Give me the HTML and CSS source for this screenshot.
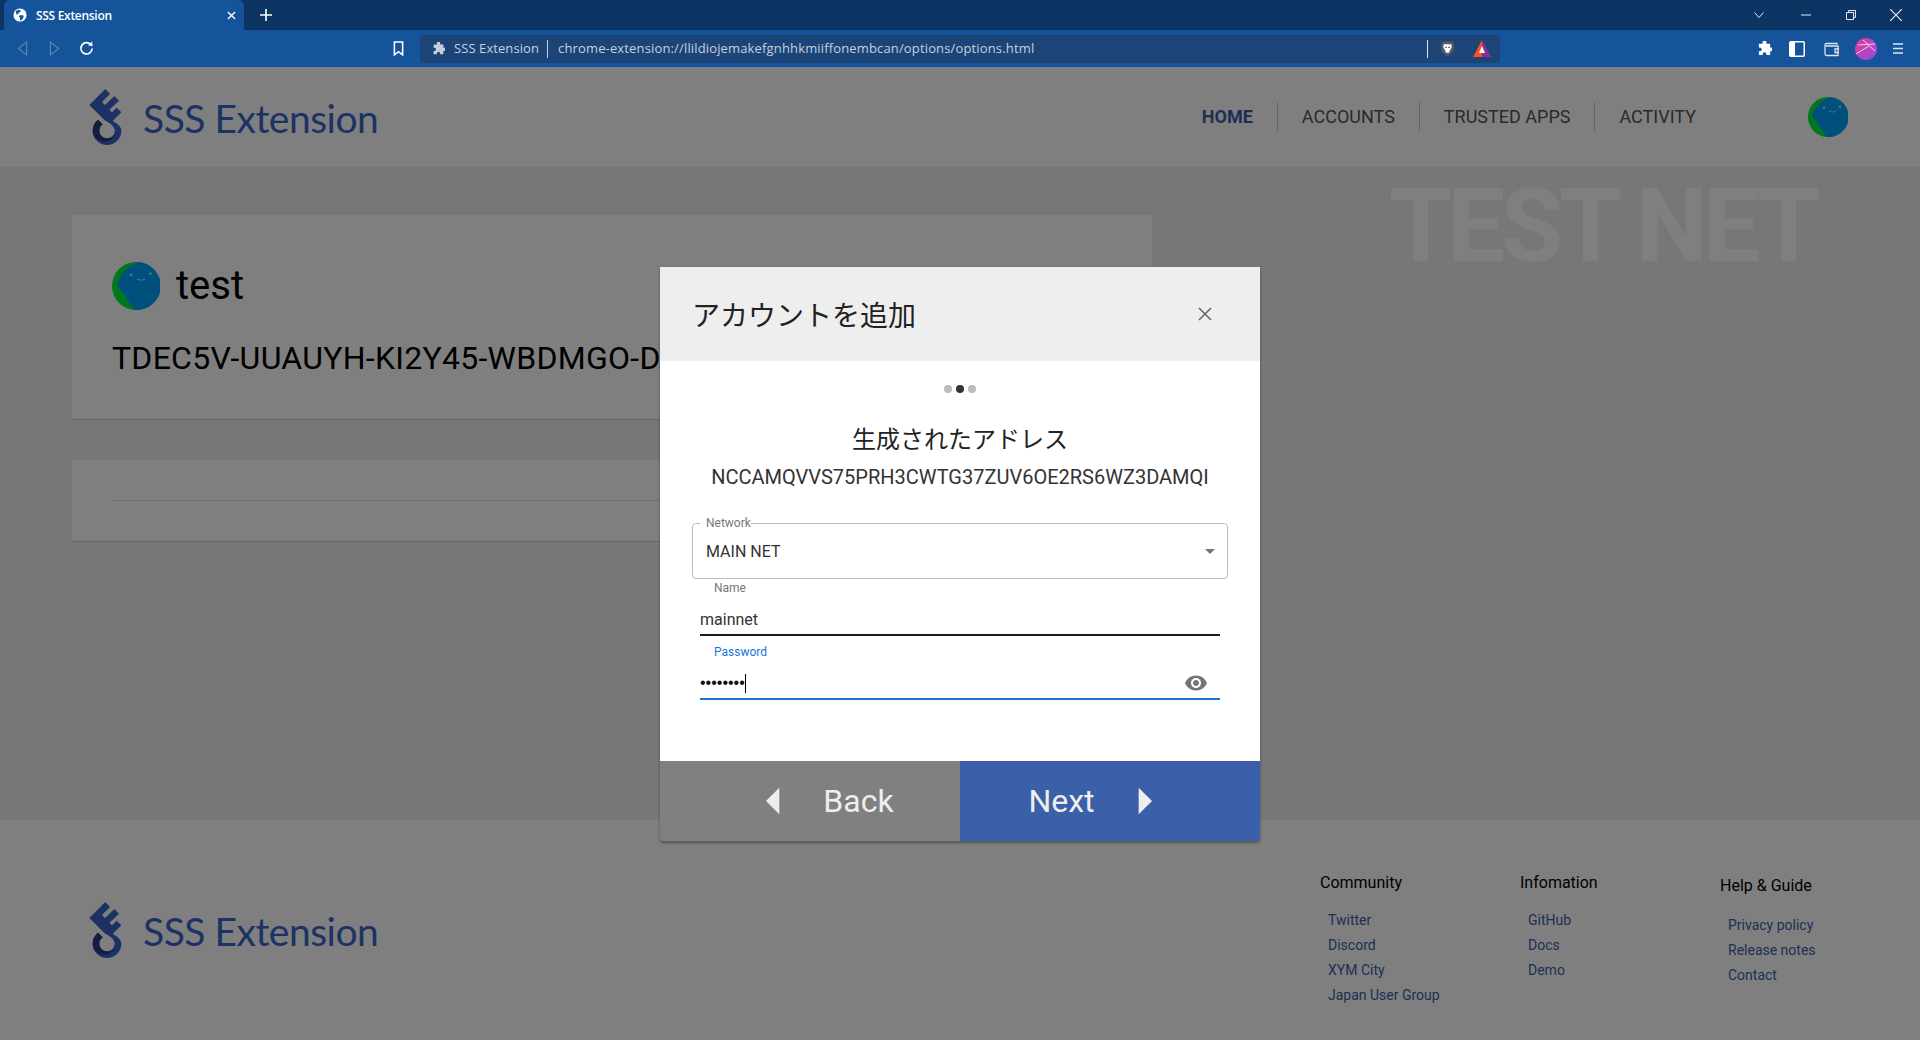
FILE: index.html
```html
<!DOCTYPE html>
<html lang="ja">

<head>
    <meta charset="UTF-8">
    <title>SSS Extension</title>
    <link rel="stylesheet" href="styles.css">
</head>

<body>
    <svg class="defs" width="0" height="0">
        <symbol id="logo" viewBox="22 12 97 168">
            <path fill="#3a64c8" d="M70 12 84 27 60 51 69 60 97 33 111 47 82 74 90 82 104 68 118 82 92 108C106 115 118 125 118 137A43 43 0 0 1 32 137C32 122 38 112 48 104L62 118C54 124 52 130 52 137A23 23 0 0 0 98 137C98 125 85 115 68 106L22 60Z" />
            <path fill="#243c78" d="M48 104 62 118C54 124 52 130 52 137 52 150 62 160 75 160 85 160 92 158 98 150 92 165 78 172 62 170 42 165 32 152 32 137 32 122 38 112 48 104Z" />
        </symbol>
        <symbol id="avatar" viewBox="84 36 120 120">
            <circle cx="144" cy="96" r="60" fill="#00f03c" />
            <path fill="#00a0fa" d="M150 36 A60 60 0 0 1 142 156 L140 156 L96 92 C105 65 125 45 150 36Z" />
            <circle cx="132" cy="68" r="3.5" fill="#bfe4fa" />
            <circle cx="180" cy="65" r="3.5" fill="#bfe4fa" />
            <path d="M147 79q10 5 20 0" fill="none" stroke="#bfe4fa" stroke-width="2.5" />
        </symbol>
    </svg>

    <div class="browser">
        <div class="tabstrip">
            <div class="tab">
                <svg class="tab-globe" viewBox="0 0 16 16">
                    <circle cx="8" cy="8" r="7.5" fill="#fff" />
                    <path fill="#15549b" d="M3 3.5 6.5 2 9 3 8 5 6 5.500 6 7 4 7.500ZM8.500 8 12 8.500 12 11 9.500 14 8 14 8 11 6.500 9.500Z" />
                </svg>
                <span class="tab-title">SSS Extension</span>
                <svg class="tab-close" viewBox="0 0 10 10"><path d="M1 1 9 9M9 1 1 9" /></svg>
            </div>
            <svg class="tab-new" viewBox="0 0 12 12"><path d="M6 0V12M0 6H12" /></svg>
            <div class="win-controls">
                <svg class="win-chevron" viewBox="0 0 10 6"><path d="M.5.5 5 5.500 9.500.5" /></svg>
                <svg class="win-min" viewBox="0 0 10 10"><path d="M0 5H10" /></svg>
                <svg class="win-restore" viewBox="0 0 10 10"><path d="M.5 2.500H7.500V9.500H.5ZM2.500 2.500V.5H9.500V7.500H7.500" /></svg>
                <svg class="win-close" viewBox="0 0 10 10"><path d="M0 0 10 10M10 0 0 10" /></svg>
            </div>
        </div>

        <div class="toolbar">
            <svg class="tb-back" viewBox="0 0 12 16"><path d="M10.500 1 1.500 8 10.500 15Z" /></svg>
            <svg class="tb-forward" viewBox="0 0 12 16"><path d="M1.500 1 10.500 8 1.500 15Z" /></svg>
            <svg class="tb-reload" viewBox="0 0 16 16">
                <path d="M13 4.500A6 6 0 1 0 14 8" />
                <path class="solid" d="M9.500 4.500 14.500 5.500 14 .5Z" />
            </svg>
            <svg class="tb-bookmark" viewBox="0 0 12 16"><path d="M1.500 1H10.500V15L6 11.500 1.500 15Z" /></svg>
            <div class="urlbar">
                <svg class="puzzle" viewBox="0 0 16 16"><path d="M6 1a2 2 0 0 1 4 0V3H14V7H15a2 2 0 0 1 0 4H14V15H10V14a2 2 0 0 0-4 0V15H2V11H3a2 2 0 0 0 0-4H2V3H6Z" /></svg>
                <span class="url-name">SSS Extension</span>
                <span class="url-sep"></span>
                <span class="url-text">chrome-extension://llildiojemakefgnhhkmiiffonembcan/options/options.html</span>
                <span class="url-sep url-sep-end"></span>
                <svg class="brave" viewBox="0 0 16 18">
                    <path fill="#555a66" d="M3 1H13L15 4 14 12 8 17 2 12 1 4Z" />
                    <path fill="#fff" d="M4 4H12L12.500 7 10.500 10.500 9.500 13H6.500L5.500 10.500 3.500 7Z" />
                    <path fill="#555a66" d="M5.500 6.500H7L7.500 8H5.500ZM9 6.500H10.500V8H8.500Z" />
                </svg>
                <svg class="rewards" viewBox="0 0 18 18">
                    <path fill="#ff4f20" d="M9 0 0 17H9Z" />
                    <path fill="#8f2b9c" d="M9 0 18 17H9Z" />
                    <path fill="#fff" d="M9 6 12 13H6Z" />
                </svg>
            </div>
            <svg class="puzzle puzzle-white" viewBox="0 0 16 16"><path d="M6 1a2 2 0 0 1 4 0V3H14V7H15a2 2 0 0 1 0 4H14V15H10V14a2 2 0 0 0-4 0V15H2V11H3a2 2 0 0 0 0-4H2V3H6Z" /></svg>
            <svg class="tb-sidebar" viewBox="0 0 16 16">
                <rect x=".75" y=".75" width="14.500" height="14.500" rx="1" fill="none" stroke="#fff" stroke-width="1.500" />
                <rect x="1" y="1" width="5" height="14" fill="#fff" />
            </svg>
            <svg class="tb-wallet" viewBox="0 0 16 16">
                <path d="M13 3.500V2.500H2.500A1.500 1.500 0 0 0 1 4V13A1.500 1.500 0 0 0 2.500 14.500H14V5H2" />
                <path d="M15 8H11V11.500H15" />
            </svg>
            <svg class="tb-profile" viewBox="0 0 22 22">
                <defs>
                    <linearGradient id="profile-fill" x1="0" y1="0" x2="1" y2="1">
                        <stop offset="0" stop-color="#e8389a" />
                        <stop offset="1" stop-color="#8a50e0" />
                    </linearGradient>
                </defs>
                <circle cx="11" cy="11" r="11" fill="url(#profile-fill)" />
                <path d="M3 7 20 6M8 2 20 13M1 16 14 8" stroke="#f6cbe6" stroke-width="1" fill="none" />
            </svg>
            <svg class="tb-menu" viewBox="0 0 10 12"><path d="M0 1.500H10M0 6H10M0 10.500H10" /></svg>
        </div>

        <div class="page">
            <header class="site-header">
                <div class="brand">
                    <svg class="brand-logo"><use href="#logo" /></svg>
                    <span class="brand-name">SSS Extension</span>
                </div>
                <nav class="site-nav">
                    <a class="nav-item active">HOME</a>
                    <a class="nav-item">ACCOUNTS</a>
                    <a class="nav-item">TRUSTED APPS</a>
                    <a class="nav-item">ACTIVITY</a>
                </nav>
                <svg class="header-avatar"><use href="#avatar" /></svg>
            </header>

            <main class="home">
                <div class="watermark">TEST NET</div>
                <section class="card account-card">
                    <div class="account-head">
                        <svg class="account-avatar"><use href="#avatar" /></svg>
                        <span class="account-name">test</span>
                    </div>
                    <div class="account-address">TDEC5V-UUAUYH-KI2Y45-WBDMGO-D</div>
                </section>
                <section class="card empty-card">
                    <hr class="card-rule">
                </section>
            </main>

            <footer class="site-footer">
                <div class="brand footer-brand">
                    <svg class="brand-logo"><use href="#logo" /></svg>
                    <span class="brand-name">SSS Extension</span>
                </div>
                <div class="footer-cols">
                    <div class="footer-col">
                        <h4>Community</h4>
                        <a>Twitter</a>
                        <a>Discord</a>
                        <a>XYM City</a>
                        <a>Japan User Group</a>
                    </div>
                    <div class="footer-col">
                        <h4>Infomation</h4>
                        <a>GitHub</a>
                        <a>Docs</a>
                        <a>Demo</a>
                    </div>
                    <div class="footer-col footer-col-help">
                        <h4>Help &amp; Guide</h4>
                        <a>Privacy policy</a>
                        <a>Release notes</a>
                        <a>Contact</a>
                    </div>
                </div>
            </footer>

            <div class="overlay">
                <div class="modal">
                    <div class="modal-head">
                        <h2>アカウントを追加</h2>
                        <svg class="modal-close" viewBox="0 0 14 14"><path d="M1 1 13 13M13 1 1 13" /></svg>
                    </div>
                    <div class="modal-body">
                        <div class="dots">
                            <span class="dot"></span>
                            <span class="dot current"></span>
                            <span class="dot"></span>
                        </div>
                        <h3>生成されたアドレス</h3>
                        <p class="new-address">NCCAMQVVS75PRH3CWTG37ZUV6OE2RS6WZ3DAMQI</p>

                        <div class="select-field">
                            <label class="select-label">Network</label>
                            <span>MAIN NET</span>
                            <span class="select-arrow"></span>
                        </div>

                        <div class="text-field">
                            <label>Name</label>
                            <div class="text-row">mainnet</div>
                        </div>
                        <div class="text-field focused">
                            <label>Password</label>
                            <div class="text-row">
                                <span class="pw-dots">••••••••</span><span class="caret"></span>
                                <svg class="eye" viewBox="0 0 24 24"><path d="M12 4.500C7 4.500 2.730 7.610 1 12c1.730 4.390 6 7.500 11 7.500s9.270-3.110 11-7.500c-1.730-4.390-6-7.500-11-7.500zM12 17c-2.760 0-5-2.240-5-5s2.240-5 5-5 5 2.240 5 5-2.240 5-5 5zm0-8c-1.660 0-3 1.340-3 3s1.340 3 3 3 3-1.340 3-3-1.340-3-3-3z" /></svg>
                            </div>
                        </div>
                    </div>
                    <div class="modal-actions">
                        <button class="btn-back" type="button">
                            <svg class="btn-arrow" viewBox="0 0 24 24"><path d="M14 7l-5 5 5 5V7z" /></svg>
                            Back
                        </button>
                        <button class="btn-next" type="button">
                            Next
                            <svg class="btn-arrow" viewBox="0 0 24 24"><path d="M10 17l5-5-5-5v10z" /></svg>
                        </button>
                    </div>
                </div>
            </div>
        </div>
    </div>
</body>

</html>
```

FILE: styles.css
```css
* {
    box-sizing: border-box;
}

html,
body {
    height: 100%;
    margin: 0;
    overflow: hidden;
}

body {
    font-family: Roboto, "Noto Sans CJK JP", sans-serif;
}

.defs {
    position: absolute;
}

.browser {
    display: flex;
    flex-direction: column;
    height: 100%;
}

/* browser chrome */
.tabstrip {
    display: flex;
    align-items: center;
    flex: 0 0 30px;
    padding-left: 4px;
    background-color: #0d3564;
}

.tab {
    display: flex;
    align-items: center;
    width: 240px;
    height: 30px;
    padding-left: 9px;
    background-color: #15549b;
    border-radius: 6px 6px 0 0;
}

.tab-globe {
    width: 14px;
    height: 14px;
}

.tab-title {
    margin-left: 9px;
    color: #fff;
    font-family: "Open Sans", sans-serif;
    font-size: 12px;
    font-weight: 600;
    letter-spacing: -0.3px;
}

.tab-close {
    width: 9px;
    height: 9px;
    margin-left: auto;
    margin-right: 8px;
    fill: none;
    stroke: #fff;
    stroke-width: 1.5;
}

.tab-new {
    width: 12px;
    height: 12px;
    margin-left: 16px;
    fill: none;
    stroke: #fff;
    stroke-width: 1.6;
}

.win-controls {
    display: flex;
    align-items: center;
    margin-left: auto;
    padding-right: 18px;
}

.win-controls svg {
    width: 10px;
    height: 10px;
    fill: none;
    stroke: #e4ebf3;
    stroke-width: 1;
}

.win-controls .win-chevron {
    height: 6px;
}

.win-min {
    margin-left: 37px;
}

.win-restore {
    margin-left: 35px;
}

.win-controls .win-close {
    width: 12px;
    height: 12px;
    margin-left: 34px;
}

.toolbar {
    display: flex;
    align-items: center;
    flex: 0 0 37px;
    padding-left: 17px;
    background-color: #15549b;
}

.toolbar svg {
    flex: none;
}

.tb-back,
.tb-forward {
    width: 11px;
    height: 15px;
    fill: none;
    stroke: #5d83ad;
    stroke-width: 1.3;
}

.tb-forward {
    margin-left: 21px;
}

.tb-reload {
    width: 15px;
    height: 15px;
    margin-left: 19px;
    fill: none;
    stroke: #fff;
    stroke-width: 1.8;
}

.tb-reload .solid {
    fill: #fff;
    stroke: none;
}

.tb-bookmark {
    width: 11px;
    height: 15px;
    margin-left: 299px;
    fill: none;
    stroke: #fff;
    stroke-width: 1.7;
}

.urlbar {
    display: flex;
    align-items: center;
    width: 1080px;
    height: 28px;
    margin-left: 16px;
    padding-left: 12px;
    background-color: #1c4477;
    border-radius: 4px;
    font-family: "Open Sans", sans-serif;
    font-size: 13px;
    color: #c3d0e0;
}

.puzzle {
    width: 13px;
    height: 13px;
    fill: #c3d0e0;
}

.url-name {
    margin: -2px 0 0 9px;
    letter-spacing: 0.08px;
}

.url-sep {
    width: 1px;
    height: 18px;
    margin: 0 10px 0 8px;
    background-color: #c3d0e0;
}

.url-text {
    width: 869px;
    margin-top: -2px;
    white-space: nowrap;
    letter-spacing: 0.15px;
}

.url-sep-end {
    margin: 0;
    background-color: #dfe6ee;
}

.brave {
    width: 15px;
    height: 18px;
    margin-left: 12px;
}

.rewards {
    width: 18px;
    height: 18px;
    margin-left: 18px;
}

.puzzle-white {
    width: 15px;
    height: 15px;
    margin-left: 257px;
    fill: #fff;
}

.tb-sidebar {
    width: 16px;
    height: 16px;
    margin-left: 17px;
}

.tb-wallet {
    width: 16px;
    height: 16px;
    margin-left: 19px;
    fill: none;
    stroke: #dde6f0;
    stroke-width: 1.3;
}

.tb-profile {
    width: 22px;
    height: 22px;
    margin-left: 15px;
}

.tb-menu {
    width: 10px;
    height: 13px;
    margin-left: 16px;
    fill: none;
    stroke: #dde6f0;
    stroke-width: 1.5;
}

/* page */
.page {
    position: relative;
    display: flex;
    flex-direction: column;
    flex: 1;
    background-color: #eee;
}

.site-header {
    display: flex;
    align-items: center;
    flex: 0 0 100px;
    padding-left: 89px;
    background-color: #fff;
}

.brand {
    display: flex;
    align-items: center;
}

.brand-logo {
    width: 33px;
    height: 56px;
}

.brand-name {
    margin: 2px 0 0 21px;
    color: #3a64c8;
    font-family: Lato, sans-serif;
    font-size: 39px;
    letter-spacing: -0.5px;
    line-height: 56px;
}

.site-nav {
    display: flex;
    align-items: center;
    margin-left: auto;
}

.nav-item {
    padding: 4px 24px;
    color: #555;
    font-size: 18px;
    line-height: 22px;
    border-left: 1px solid #ccc;
}

.nav-item:first-child {
    border-left: none;
}

.nav-item.active {
    color: #3b5fa9;
    font-weight: 700;
}

.header-avatar {
    width: 40px;
    height: 40px;
    margin: 0 72px 0 88px;
}

.home {
    position: relative;
    flex: 1;
    padding: 48px 0 0 72px;
}

.watermark {
    position: absolute;
    top: 36px;
    left: 1389px;
    color: #fff;
    font-size: 102px;
    font-weight: 700;
    letter-spacing: -4.5px;
    line-height: 46px;
    white-space: nowrap;
}

.card {
    width: 1080px;
    background-color: #fff;
    border-bottom: 1px solid #ccc;
}

.account-card {
    height: 205px;
    padding: 47px 40px 0;
}

.account-head {
    display: flex;
    align-items: center;
}

.account-avatar {
    width: 48px;
    height: 48px;
}

.account-name {
    margin-left: 16px;
    font-size: 40px;
    line-height: 48px;
}

.account-address {
    margin-top: 29px;
    font-size: 32px;
    letter-spacing: 0.27px;
    line-height: 38px;
    white-space: nowrap;
}

.empty-card {
    height: 82px;
    margin-top: 40px;
    padding: 40px 40px 0;
}

.card-rule {
    margin: 0;
    border: none;
    border-top: 1px solid #ddd;
}

.site-footer {
    display: flex;
    flex: 0 0 220px;
    padding-left: 89px;
    background-color: #fff;
}

.footer-brand {
    align-self: flex-start;
    margin-top: 81px;
}

.footer-cols {
    display: flex;
    margin-left: auto;
    padding: 53px 0 0;
    width: 600px;
}

.footer-col {
    display: flex;
    flex-direction: column;
    width: 200px;
    align-items: flex-start;
}

.footer-col h4 {
    margin: 0 0 15px;
    font-size: 16px;
    font-weight: 400;
    line-height: 20px;
}

.footer-col a {
    margin-left: 8px;
    color: #3b5fa9;
    font-size: 14px;
    line-height: 25px;
}

.footer-col-help {
    padding-top: 3px;
}

.footer-col-help h4 {
    margin-bottom: 17px;
}

/* dialog */
.overlay {
    position: absolute;
    top: 0;
    right: 0;
    bottom: 0;
    left: 0;
    display: flex;
    justify-content: center;
    padding-top: 200px;
    background-color: rgba(0, 0, 0, 0.5);
}

.modal {
    display: flex;
    flex-direction: column;
    width: 600px;
    height: 574px;
    border-radius: 0 0 4px 4px;
    box-shadow: 0 2px 3px rgba(0, 0, 0, 0.35);
}

.modal-head {
    display: flex;
    align-items: center;
    justify-content: space-between;
    flex: 0 0 94px;
    padding: 0 48px 0 32px;
    background-color: #eee;
}

.modal-head h2 {
    margin: 0;
    color: #222;
    font-size: 28px;
    font-weight: 400;
}

.modal-close {
    width: 14px;
    height: 14px;
    fill: none;
    stroke: #666;
    stroke-width: 1.6;
}

.modal-body {
    flex: 0 0 400px;
    padding-top: 24px;
    background-color: #fff;
    text-align: center;
}

.dots {
    display: flex;
    justify-content: center;
    gap: 4px;
}

.dot {
    width: 8px;
    height: 8px;
    background-color: #bbb;
    border-radius: 50%;
}

.dot.current {
    background-color: #333;
}

.modal-body h3 {
    margin: 29px 0 0;
    color: #222;
    font-size: 24px;
    font-weight: 400;
    line-height: 36px;
}

.new-address {
    margin: 7px 0 0;
    color: #333;
    font-size: 20px;
    line-height: 24px;
}

.select-field {
    position: relative;
    display: flex;
    align-items: center;
    height: 56px;
    margin: 34px 32px 0;
    padding: 0 13px 0 13px;
    color: #333;
    font-size: 16px;
    text-align: left;
    border: 1px solid #bbb;
    border-radius: 4px;
}

.select-label {
    position: absolute;
    top: -9px;
    left: 7px;
    padding-left: 6px;
    color: #777;
    font-size: 12px;
    line-height: 16px;
    background-color: #fff;
}

.select-arrow {
    margin-left: auto;
    margin-right: -1px;
    border-top: 5px solid #757575;
    border-left: 5px solid transparent;
    border-right: 5px solid transparent;
}

.text-field {
    margin: 8px 40px 0;
    text-align: left;
}

.select-field + .text-field {
    margin-top: 1px;
}

.text-field label {
    display: block;
    padding-left: 14px;
    color: #777;
    font-size: 12px;
    line-height: 16px;
}

.text-row {
    display: flex;
    align-items: center;
    height: 40px;
    padding-top: 8px;
    color: #333;
    font-size: 16px;
    border-bottom: 2px solid #1c1c1c;
}

.text-field.focused label {
    color: #1976d2;
}

.text-field.focused .text-row {
    border-bottom-color: #1976d2;
}

.pw-dots {
    color: #111;
    font-family: "Liberation Sans", sans-serif;
    font-size: 16px;
}

.caret {
    width: 1px;
    height: 19px;
    background-color: #000;
}

.eye {
    width: 24px;
    height: 24px;
    margin-left: auto;
    margin-right: 12px;
    fill: #757575;
}

.modal-actions {
    display: flex;
    flex: 0 0 80px;
}

.modal-actions button {
    display: flex;
    align-items: center;
    justify-content: center;
    width: 300px;
    height: 80px;
    padding: 0;
    color: #eee;
    font-family: inherit;
    font-size: 32px;
    border: none;
    gap: 17px;
}

.modal-actions .btn-back {
    padding-left: 16px;
    background-color: #808080;
    border-bottom-left-radius: 4px;
}

.modal-actions .btn-next {
    padding-right: 16px;
    background-color: #3b5fa9;
    border-bottom-right-radius: 4px;
}

.btn-arrow {
    width: 64px;
    height: 64px;
    fill: #eee;
}
```
